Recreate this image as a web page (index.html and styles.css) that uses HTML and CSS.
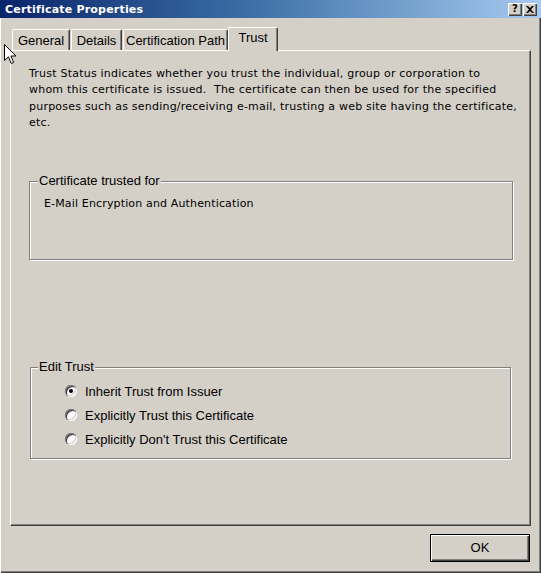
FILE: index.html
```html
<!DOCTYPE html>
<html>
<head>
<meta charset="utf-8">
<link rel="stylesheet" href="styles.css">
</head>
<body>
<div class="window">
  <div class="titlebar">
    <span class="title">Certificate Properties</span>
    <div class="caption-btns">
      <span class="cbtn help">?</span>
      <span class="cbtn close"><svg width="8" height="7" viewBox="0 0 8 7"><path d="M0 0h2l2 2 2-2h2L5 3.5 8 7H6L4 5 2 7H0l3-3.5z" fill="#000"/></svg></span>
    </div>
  </div>
  <div class="client">
    <div class="tabstrip">
      <div class="tab t-general">General</div>
      <div class="tab t-details">Details</div>
      <div class="tab t-path">Certification Path</div>
      <div class="tab t-trust active">Trust</div>
    </div>
    <div class="panel">
      <p class="desc">Trust Status indicates whether you trust the individual, group or corporation to<br>whom this certificate is issued.&nbsp; The certificate can then be used for the specified<br>purposes such as sending/receiving e-mail, trusting a web site having the certificate,<br>etc.</p>
      <div class="group g1">
        <span class="legend">Certificate trusted for</span>
        <div class="purpose">E-Mail Encryption and Authentication</div>
      </div>
      <div class="group g2">
        <span class="legend">Edit Trust</span>
        <div class="radio-row"><span class="radio checked"></span><span class="rlabel">Inherit Trust from Issuer</span></div>
        <div class="radio-row"><span class="radio"></span><span class="rlabel">Explicitly Trust this Certificate</span></div>
        <div class="radio-row"><span class="radio"></span><span class="rlabel">Explicitly Don't Trust this Certificate</span></div>
      </div>
    </div>
    <div class="buttons">
      <div class="okbtn">OK</div>
    </div>
  </div>
  <svg class="cursor" width="13" height="21" viewBox="0 0 13 21"><path d="M0.5 0.5 L0.5 16.5 L4.5 12.8 L7.2 19.5 L9.6 18.5 L7 12 L12 12 Z" fill="#fff" stroke="#000" stroke-width="1"/></svg>
</div>
</body>
</html>
```
FILE: styles.css
```css
* { box-sizing: border-box; }
html, body { margin: 0; padding: 0; background: #d4d0c8; }
body { font-family: "Liberation Sans", Arial, sans-serif; font-size: 13px; color: #000; }

.window {
  position: relative;
  width: 541px;
  height: 573px;
  background: #d4d0c8;
  box-shadow: inset 2px 0 0 -1px #fff, inset -1px -1px 0 #404040, inset -2px -2px 0 #808080;
  overflow: hidden;
}

.titlebar {
  height: 18px;
  background: linear-gradient(to right, #0a246a 0%, #3a6ea5 45%, #a6caf0 100%);
  display: flex;
  align-items: center;
  justify-content: space-between;
  padding: 0 4px 0 5px;
}
.title {
  color: #fff;
  font-family: "DejaVu Sans", Tahoma, sans-serif;
  font-weight: bold;
  font-size: 11px;
  letter-spacing: 0.2px;
}
.caption-btns { display: flex; margin-top: 1px; }
.cbtn {
  width: 14px;
  height: 13px;
  background: #d4d0c8;
  box-shadow: inset 1px 1px 0 #fff, inset -1px -1px 0 #404040, inset -2px -2px 0 #808080;
  display: flex;
  align-items: center;
  justify-content: center;
  font-family: "DejaVu Sans", sans-serif;
  font-weight: bold;
  font-size: 10px;
  line-height: 1;
  padding-bottom: 1px;
}
.cbtn.help { margin-right: 1px; }

.client { padding: 9px 10px 0 10px; }

.tabstrip {
  display: flex;
  align-items: flex-end;
  height: 23px;
  padding-left: 2px;
  position: relative;
  z-index: 1;
}
.tab {
  height: 21px;
  background: #d4d0c8;
  border-top: 1px solid #fff;
  border-left: 1px solid #fff;
  border-right: 1px solid #404040;
  box-shadow: inset -1px 0 0 #808080;
  border-top-left-radius: 2px;
  border-top-right-radius: 2px;
  text-align: center;
  line-height: 19px;
  padding-top: 1px;
  white-space: nowrap;
}
.t-general { width: 58px; margin-right: 1px; }
.t-details { width: 51px; margin-right: 1px; }
.t-path { width: 105px; }
.t-trust { width: 50px; }
.tab.active {
  height: 24px;
  margin-bottom: -1px;
  line-height: 19px;
  padding-top: 0;
}

.panel {
  width: 521px;
  height: 476px;
  border-left: 1px solid #fff;
  border-top: 1px solid #fff;
  border-right: 1px solid #404040;
  border-bottom: 1px solid #404040;
  box-shadow: inset -1px -1px 0 #808080;
  padding: 0 16px 0 18px;
}

.desc {
  margin: 15px 0 0 0;
  font-family: "DejaVu Sans", Tahoma, sans-serif;
  font-size: 11px;
  line-height: 16.3px;
  letter-spacing: 0.22px;
  white-space: nowrap;
}

.group {
  position: relative;
  border: 1px solid #808080;
  box-shadow: inset 1px 1px 0 #fff, 1px 1px 0 #fff;
}
.legend {
  position: absolute;
  top: -9px;
  left: 8px;
  padding: 0 1px;
  background: #d4d0c8;
  line-height: 15px;
  white-space: nowrap;
}
.g1 {
  margin: 50px 0 0 0;
  width: 484px;
  height: 79px;
  padding: 14px 0 0 14px;
}
.purpose {
  font-family: "DejaVu Sans", Tahoma, sans-serif;
  font-size: 11px;
  line-height: 16px;
  letter-spacing: 0.15px;
}
.g2 {
  margin: 107px 0 0 1px;
  width: 481px;
  height: 92px;
  padding: 11px 0 0 34px;
}
.g2 .legend { left: 7px; }
.radio-row {
  display: flex;
  align-items: center;
  height: 24px;
}
.radio {
  position: relative;
  width: 12px;
  height: 12px;
  border-radius: 50%;
  background: #fff;
  box-shadow: inset 1px 1px 0 #808080, inset 2px 2px 0 #404040, inset -1px -1px 0 #fff, inset -2px -2px 0 #d4d0c8;
  margin-right: 8px;
  flex: none;
}
.radio.checked::after {
  content: "";
  position: absolute;
  left: 4px;
  top: 4px;
  width: 4px;
  height: 4px;
  border-radius: 50%;
  background: #000;
}
.rlabel { white-space: nowrap; line-height: 15px; }

.buttons {
  display: flex;
  justify-content: flex-end;
  padding: 8px 1px 0 0;
}
.okbtn {
  width: 100px;
  height: 28px;
  border: 1px solid #000;
  background: #d4d0c8;
  box-shadow: inset 1px 1px 0 #fff, inset -1px -1px 0 #404040, inset -2px -2px 0 #808080;
  display: flex;
  align-items: center;
  justify-content: center;
  padding-bottom: 1px;
}

.cursor {
  position: absolute;
  left: 4px;
  top: 44px;
  z-index: 5;
}
```
